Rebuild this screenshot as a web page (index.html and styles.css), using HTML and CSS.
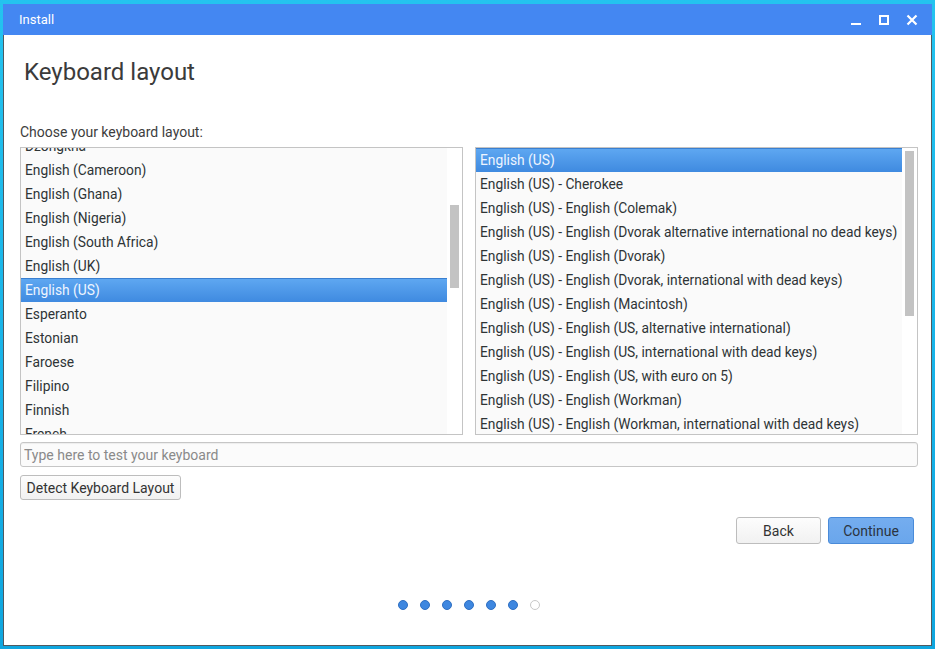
FILE: index.html
```html
<!DOCTYPE html>
<html>
<head>
<meta charset="utf-8">
<link rel="stylesheet" href="styles.css">
</head>
<body>
<div class="desktop">
  <div class="window">
    <div class="titlebar">
      <span class="title">Install</span>
      <div class="controls">
        <svg class="ctl" width="12" height="12" viewBox="0 0 12 12"><rect x="1" y="9" width="10" height="2" fill="#fff"/></svg>
        <svg class="ctl" width="12" height="12" viewBox="0 0 12 12"><rect x="2" y="2" width="8" height="8" fill="none" stroke="#fff" stroke-width="2"/></svg>
        <svg class="ctl" width="12" height="12" viewBox="0 0 12 12"><path d="M1.5 1.5 L10.5 10.5 M10.5 1.5 L1.5 10.5" stroke="#fff" stroke-width="2.2"/></svg>
      </div>
    </div>
    <div class="content">
      <h1 class="heading">Keyboard layout</h1>
      <div class="label">Choose your keyboard layout:</div>
      <div class="lists">
        <div class="list">
          <div class="items items-left">
            <div class="row">Dzongkha</div>
            <div class="row">English (Cameroon)</div>
            <div class="row">English (Ghana)</div>
            <div class="row">English (Nigeria)</div>
            <div class="row">English (South Africa)</div>
            <div class="row">English (UK)</div>
            <div class="row selected">English (US)</div>
            <div class="row">Esperanto</div>
            <div class="row">Estonian</div>
            <div class="row">Faroese</div>
            <div class="row">Filipino</div>
            <div class="row">Finnish</div>
            <div class="row">French</div>
          </div>
          <div class="scroll"><div class="thumb thumb-left"></div></div>
        </div>
        <div class="list">
          <div class="items">
            <div class="row selected">English (US)</div>
            <div class="row">English (US) - Cherokee</div>
            <div class="row">English (US) - English (Colemak)</div>
            <div class="row">English (US) - English (Dvorak alternative international no dead keys)</div>
            <div class="row">English (US) - English (Dvorak)</div>
            <div class="row">English (US) - English (Dvorak, international with dead keys)</div>
            <div class="row">English (US) - English (Macintosh)</div>
            <div class="row">English (US) - English (US, alternative international)</div>
            <div class="row">English (US) - English (US, international with dead keys)</div>
            <div class="row">English (US) - English (US, with euro on 5)</div>
            <div class="row">English (US) - English (Workman)</div>
            <div class="row">English (US) - English (Workman, international with dead keys)</div>
          </div>
          <div class="scroll"><div class="thumb thumb-right"></div></div>
        </div>
      </div>
      <input class="test" type="text" placeholder="Type here to test your keyboard">
      <div class="detect-row"><button class="btn detect">Detect Keyboard Layout</button></div>
      <div class="nav">
        <button class="btn back">Back</button>
        <button class="btn primary">Continue</button>
      </div>
      <div class="dots">
        <span class="dot on"></span><span class="dot on"></span><span class="dot on"></span><span class="dot on"></span><span class="dot on"></span><span class="dot on"></span><span class="dot"></span>
      </div>
    </div>
  </div>
</div>
</body>
</html>
```
FILE: styles.css
```css
* { box-sizing: border-box; }
html, body { margin: 0; padding: 0; }
body {
  font-family: Roboto, "Liberation Sans", sans-serif;
  color: #3a3a3a;
}
.desktop {
  width: 935px;
  height: 649px;
  padding: 4px 3px 3px 3px;
  background: linear-gradient(180deg, #24c3ef 0%, #17b2e8 60%, #0fa6df 100%);
}
.window {
  width: 929px;
  height: 642px;
  background: #fff;
  border: 1px solid #4f5a60;
  border-top: none;
  display: flex;
  flex-direction: column;
}
.titlebar {
  height: 31px;
  margin: 0 -1px;
  background: #4487f2;
  display: flex;
  align-items: center;
  padding: 0 0 0 16px;
  color: #fff;
}
.title { font-size: 13px; flex: 1; }
.controls { display: flex; gap: 16px; padding-right: 14px; align-items: center; }
.ctl { display: block; }
.content {
  flex: 1;
  padding: 0 13px 0 16px;
  display: flex;
  flex-direction: column;
}
.heading {
  font-size: 24px;
  font-weight: 400;
  margin: 22px 0 0 4px;
  line-height: 30px;
  color: #3b3b3b;
}
.label {
  font-size: 14px;
  margin-top: 37px;
  line-height: 17px;
  color: #3d3d3d;
}
.lists {
  display: flex;
  gap: 12px;
  margin-top: 6px;
}
.list {
  width: 443px;
  height: 288px;
  border: 1px solid #c4c4c4;
  display: flex;
  overflow: hidden;
  background: #fff;
}
.items {
  width: 426px;
  background: #fafafa;
  overflow: hidden;
}
.items-left .row:first-child { margin-top: -14px; }
.row {
  height: 24px;
  line-height: 24px;
  padding-left: 4px;
  font-size: 13.8px;
  color: #2e3436;
  white-space: nowrap;
}
.row.selected {
  background: linear-gradient(180deg, #5ea7f1 0%, #3f8ae0 100%);
  border-top: 1px solid #3a7fd0;
  line-height: 22px;
  color: #eef5ff;
}
.scroll {
  width: 15px;
  background: #fff;
}
.thumb {
  width: 9px;
  margin-left: 3px;
  background: #c3c3c3;
}
.thumb-left { margin-top: 57px; height: 83px; }
.thumb-right { margin-top: 3px; height: 165px; }
.test {
  margin-top: 7px;
  height: 25px;
  width: 898px;
  border: 1px solid #c6c6c6;
  border-radius: 3px;
  background: #fbfbfb;
  font-family: Roboto, "Liberation Sans", sans-serif;
  font-size: 14px;
  padding: 0 3px;
  box-shadow: inset 0 1px 1px rgba(0,0,0,0.06);
}
.test::placeholder { color: #8a8a8a; }
.detect-row { margin-top: 8px; display: flex; }
.btn {
  font-family: Roboto, "Liberation Sans", sans-serif;
  font-size: 14px;
  color: #333;
  border: 1px solid #bdbdbd;
  border-radius: 3px;
  background: linear-gradient(180deg, #fdfdfd, #f1f1f1);
  padding: 0;
}
.detect { width: 161px; height: 25px; }
.nav {
  margin-top: 17px;
  display: flex;
  justify-content: flex-end;
  gap: 7px;
  padding-right: 4px;
}
.back { width: 85px; height: 27px; }
.primary {
  width: 86px;
  height: 27px;
  background: linear-gradient(180deg, #74adef, #6aa6ec);
  border-color: #4a8bd9;
  color: #2b3440;
}
.dots {
  margin-top: 56px;
  display: flex;
  justify-content: center;
  gap: 12px;
}
.dot {
  width: 10px;
  height: 10px;
  border-radius: 50%;
  background: #fff;
  border: 1px solid #c8c8c8;
}
.dot.on {
  background: #3e87e0;
  border-color: #2f6fc2;
}
```
